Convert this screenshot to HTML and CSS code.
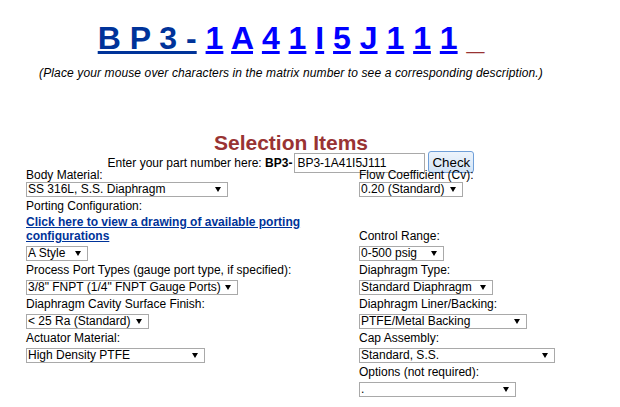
FILE: index.html
```html
<!DOCTYPE html>
<html>
<head>
<meta charset="utf-8">
<title>BP3 Selection</title>
<link rel="stylesheet" href="styles.css">
</head>
<body>
<div class="page">
  <div class="matrix"><a class="m-prefix" href="#">B P 3 -</a> <a href="#">1</a> <a href="#">A</a> <a href="#">4</a> <a href="#">1</a> <a href="#">I</a> <a href="#">5</a> <a href="#">J</a> <a href="#">1</a> <a href="#">1</a> <a href="#">1</a> <span class="m-blank">_</span></div>
  <div class="subtitle">(Place your mouse over characters in the matrix number to see a corresponding description.)</div>
  <div class="heading">Selection Items</div>
  <div class="partrow">
    <span class="partlabel">Enter your part number here: <b>BP3-</b></span>
    <input class="partinput" type="text" value="BP3-1A41I5J111">
    <button class="checkbtn" type="button">Check</button>
  </div>
  <div class="form">
    <div class="field first">
      <span class="lbl">Body Material:</span>
      <span class="sel sel-body"><select><option>SS 316L, S.S. Diaphragm</option></select></span>
    </div>
    <div class="field first">
      <span class="lbl">Flow Coefficient (Cv):</span>
      <span class="sel sel-flow"><select><option>0.20 (Standard)</option></select></span>
    </div>
    <div class="field">
      <span class="lbl">Porting Configuration:</span>
      <a class="portlink" href="#">Click here to view a drawing of available porting configurations</a>
      <span class="sel sel-style"><select><option>A Style</option></select></span>
    </div>
    <div class="field bottom">
      <span class="lbl">Control Range:</span>
      <span class="sel sel-range"><select><option>0-500 psig</option></select></span>
    </div>
    <div class="field">
      <span class="lbl">Process Port Types (gauge port type, if specified):</span>
      <span class="sel sel-port"><select><option>3/8" FNPT (1/4" FNPT Gauge Ports)</option></select></span>
    </div>
    <div class="field">
      <span class="lbl">Diaphragm Type:</span>
      <span class="sel sel-dtype"><select><option>Standard Diaphragm</option></select></span>
    </div>
    <div class="field">
      <span class="lbl">Diaphragm Cavity Surface Finish:</span>
      <span class="sel sel-finish"><select><option>&lt; 25 Ra (Standard)</option></select></span>
    </div>
    <div class="field">
      <span class="lbl">Diaphragm Liner/Backing:</span>
      <span class="sel sel-liner"><select><option>PTFE/Metal Backing</option></select></span>
    </div>
    <div class="field">
      <span class="lbl">Actuator Material:</span>
      <span class="sel sel-actuator"><select><option>High Density PTFE</option></select></span>
    </div>
    <div class="field">
      <span class="lbl">Cap Assembly:</span>
      <span class="sel sel-cap"><select><option>Standard, S.S.</option></select></span>
    </div>
    <div class="field col2">
      <span class="lbl">Options (not required):</span>
      <span class="sel sel-options"><select><option>.</option></select></span>
    </div>
  </div>
</div>
</body>
</html>
```

FILE: styles.css
```css
body {
  margin: 0;
  background: #ffffff;
  color: #000000;
  font-family: "Liberation Sans", Arial, sans-serif;
  font-size: 12px;
}

.page {
  width: 530px;
  margin-left: 26px;
  padding-top: 20px;
}

.matrix {
  text-align: center;
  font-size: 32px;
  font-weight: bold;
  line-height: 37px;
  white-space: nowrap;
}

.matrix a {
  color: #0000ff;
  text-decoration: underline;
}

.matrix a.m-prefix {
  color: #003399;
}

.m-blank {
  color: #993333;
}

.subtitle {
  margin-top: 9px;
  text-align: center;
  font-style: italic;
  line-height: 14px;
  letter-spacing: 0.12px;
  white-space: nowrap;
}

.heading {
  margin-top: 55px;
  text-align: center;
  font-size: 21px;
  font-weight: bold;
  line-height: 16px;
  color: #993333;
}

.partrow {
  display: flex;
  justify-content: center;
  align-items: baseline;
  height: 17px;
}

.partlabel {
  line-height: 14px;
  white-space: nowrap;
}

.partinput {
  box-sizing: border-box;
  width: 131px;
  height: 20px;
  margin: 0 0 0 2px;
  padding: 0 2px;
  border: 1px solid #a9a9a9;
  font-family: "Liberation Sans", Arial, sans-serif;
  font-size: 12px;
  color: #000;
}

.checkbtn {
  box-sizing: border-box;
  width: 46px;
  height: 22px;
  margin: 0 0 0 3px;
  padding: 0;
  border: 1px solid #6f9fd8;
  border-radius: 3px;
  background: linear-gradient(#edf4fc, #d3e4f6);
  font-family: "Liberation Sans", Arial, sans-serif;
  font-size: 13.33px;
  color: #000;
}

.form {
  display: grid;
  grid-template-columns: 333px 197px;
}

.field {
  display: flex;
  flex-direction: column;
  align-items: flex-start;
}

.field.bottom {
  align-self: end;
}

.field.col2 {
  grid-column: 2;
}

.lbl {
  line-height: 14px;
  white-space: nowrap;
}

.portlink {
  margin-top: 2px;
  line-height: 14px;
  font-weight: bold;
  color: #003399;
  text-decoration: underline;
}

.sel {
  position: relative;
  display: block;
  height: 15px;
  margin-top: 3px;
  margin-bottom: 2px;
}

.field.first .sel {
  margin-top: 0;
}

.sel select {
  -webkit-appearance: none;
  appearance: none;
  box-sizing: border-box;
  display: block;
  width: 100%;
  height: 15px;
  margin: 0;
  padding: 0 0 0 1px;
  border: 1px solid #a9a9a9;
  border-radius: 0;
  background: #ffffff;
  font-family: "Liberation Sans", Arial, sans-serif;
  font-size: 12px;
  line-height: 13px;
  color: #000;
}

.sel::after {
  content: "";
  position: absolute;
  right: 7px;
  top: 5px;
  width: 0;
  height: 0;
  border-left: 3px solid transparent;
  border-right: 3px solid transparent;
  border-top: 5px solid #000;
  pointer-events: none;
}

.sel-body { width: 202px; }
.sel-style { width: 62px; }
.sel-port { width: 212px; }
.sel-finish { width: 123px; }
.sel-actuator { width: 179px; }
.sel-flow { width: 104px; }
.sel-range { width: 85px; }
.sel-dtype { width: 134px; }
.sel-liner { width: 168px; }
.sel-cap { width: 196px; }
.sel-options { width: 157px; }
```
